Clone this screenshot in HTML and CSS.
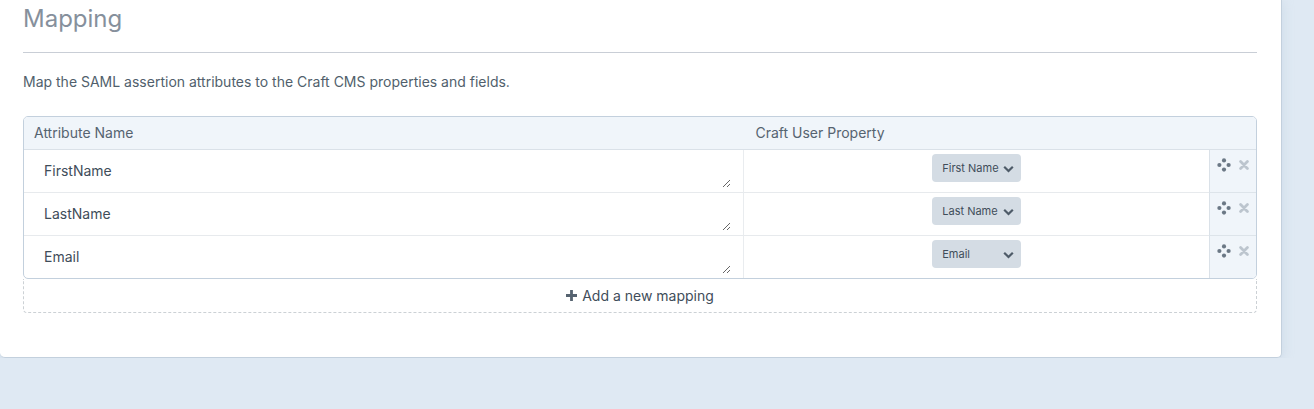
FILE: index.html
```html
<!DOCTYPE html>
<html lang="en">
<head>
<meta charset="utf-8">
<title>Mapping</title>
<link rel="stylesheet" href="styles.css">
</head>
<body>
<svg class="symbols" aria-hidden="true">
  <symbol id="move" viewBox="0 0 14 14"><circle cx="7" cy="2.4" r="2.1"/><circle cx="2.4" cy="7" r="2.1"/><circle cx="11.6" cy="7" r="2.1"/><circle cx="7" cy="11.6" r="2.1"/></symbol>
  <symbol id="remove" viewBox="0 0 10 10"><path d="M1.6 1.6l6.8 6.8M8.4 1.6L1.6 8.4" fill="none" stroke="currentColor" stroke-width="2.8" stroke-linecap="round"/></symbol>
  <symbol id="chevron" viewBox="0 0 11 8"><path d="M1.2 1.7l4.3 4.3 4.3-4.3" fill="none" stroke="currentColor" stroke-width="2.2"/></symbol>
</svg>
<main class="pane">
  <h2 class="title">Mapping</h2>
  <p class="intro">Map the SAML assertion attributes to the Craft CMS properties and fields.</p>
  <table class="mapping">
    <colgroup><col class="col-name"><col><col class="col-actions"></colgroup>
    <thead>
      <tr><th scope="col">Attribute Name</th><th scope="col">Craft User Property</th><td class="head-end"></td></tr>
    </thead>
    <tbody>
      <tr>
        <td><textarea class="name" rows="1" aria-label="Attribute Name">FirstName</textarea></td>
        <td class="property"><div class="select"><select aria-label="Craft User Property"><option>First Name</option><option>Last Name</option><option>Email</option></select><svg class="chevron"><use href="#chevron"/></svg></div></td>
        <td class="actions"><div class="tools"><button type="button" class="move" aria-label="Reorder"><svg><use href="#move"/></svg></button><button type="button" class="remove" aria-label="Delete"><svg><use href="#remove"/></svg></button></div></td>
      </tr>
      <tr>
        <td><textarea class="name" rows="1" aria-label="Attribute Name">LastName</textarea></td>
        <td class="property"><div class="select"><select aria-label="Craft User Property"><option>First Name</option><option selected>Last Name</option><option>Email</option></select><svg class="chevron"><use href="#chevron"/></svg></div></td>
        <td class="actions"><div class="tools"><button type="button" class="move" aria-label="Reorder"><svg><use href="#move"/></svg></button><button type="button" class="remove" aria-label="Delete"><svg><use href="#remove"/></svg></button></div></td>
      </tr>
      <tr>
        <td><textarea class="name" rows="1" aria-label="Attribute Name">Email</textarea></td>
        <td class="property"><div class="select"><select aria-label="Craft User Property"><option>First Name</option><option>Last Name</option><option selected>Email</option></select><svg class="chevron"><use href="#chevron"/></svg></div></td>
        <td class="actions"><div class="tools"><button type="button" class="move" aria-label="Reorder"><svg><use href="#move"/></svg></button><button type="button" class="remove" aria-label="Delete"><svg><use href="#remove"/></svg></button></div></td>
      </tr>
    </tbody>
  </table>
  <button type="button" class="add"><svg class="plus" viewBox="0 0 11 11"><path d="M5.5 0v11M0 5.5h11" fill="none" stroke="currentColor" stroke-width="2.8"/></svg>Add a new mapping</button>
</main>
</body>
</html>
```
FILE: styles.css
```css
* { box-sizing: border-box; }

body {
  margin: 0;
  background: #dfe9f3;
  color: #3f4d5a;
  font: 14px/20px Inter, Roboto, "Liberation Sans", sans-serif;
}

.symbols { position: absolute; width: 0; height: 0; }

button, select, textarea { font: inherit; color: inherit; }

.pane {
  margin-right: 32px;
  padding: 4px 24px 44px 23px;
  background: #fff;
  border: solid #c3d0dd;
  border-width: 0 1px 1px 0;
  border-radius: 0 0 5px 5px;
  box-shadow: 0 2px 12px rgba(170, 190, 208, 0.35);
}

.title {
  margin: 0;
  padding-bottom: 18px;
  border-bottom: 1px solid #c9ced6;
  color: #86909c;
  font-size: 24px;
  line-height: 30px;
  font-weight: 400;
}

.intro { margin: 19px 0 24px; color: #515f6c; }

.mapping {
  width: 100%;
  table-layout: fixed;
  border: 1px solid #c3d0dd;
  border-radius: 5px;
  border-spacing: 0;
  overflow: hidden;
}

.col-name { width: 58.4%; }
.col-actions { width: 47px; }

.mapping th, .head-end {
  height: 33px;
  padding: 0 10px;
  background: #f0f5fa;
  border-bottom: 1px solid #dae1e8;
  color: #566370;
  font-weight: 400;
  text-align: left;
}

.mapping th + th { padding-left: 12px; }

.mapping tbody td {
  height: 43px;
  padding: 0;
  border-bottom: 1px solid #e7eaed;
  vertical-align: top;
}

.mapping tbody tr:last-child td { height: 42px; border-bottom: 0; }
.mapping tbody td.property { border-left: 1px solid #e9ecef; padding-top: 4px; }
.mapping tbody td.actions { border-left: 1px solid #dae1e8; border-bottom-color: #dde4ea; background: #f0f5fa; }

.name {
  display: block;
  width: calc(100% - 22px);
  height: 38px;
  margin: 0 12px 0 10px;
  padding: 11px 10px 7px;
  border: 0;
  background: transparent;
  overflow: hidden;
  resize: vertical;
}

.select { position: relative; width: 89px; margin: 0 auto; }

.select select {
  display: block;
  width: 100%;
  height: 28px;
  padding: 0 22px 0 10px;
  appearance: none;
  border: 0;
  border-radius: 4px;
  background: #d4dce4;
  font-size: 11px;
}

.chevron {
  position: absolute;
  top: 11px;
  right: 7px;
  width: 11px;
  height: 8px;
  color: #4e5b68;
  pointer-events: none;
}

.tools { display: flex; align-items: center; gap: 8px; padding: 8px 0 0 7px; }
.tools button { display: block; padding: 0; border: 0; background: none; }
.tools svg { display: block; width: 14px; height: 14px; fill: currentColor; }
.tools .move { color: #6b7885; }
.tools .remove { color: #bcc5ce; }
.tools .remove svg { width: 10px; height: 10px; }

.add {
  display: flex;
  width: 100%;
  height: 34px;
  align-items: center;
  justify-content: center;
  gap: 5px;
  padding: 0;
  border: 1px dashed #ccd1d5;
  border-top: 0;
  border-radius: 0 0 4px 4px;
  background: none;
}

.plus { width: 11px; height: 11px; color: #566370; }
```
